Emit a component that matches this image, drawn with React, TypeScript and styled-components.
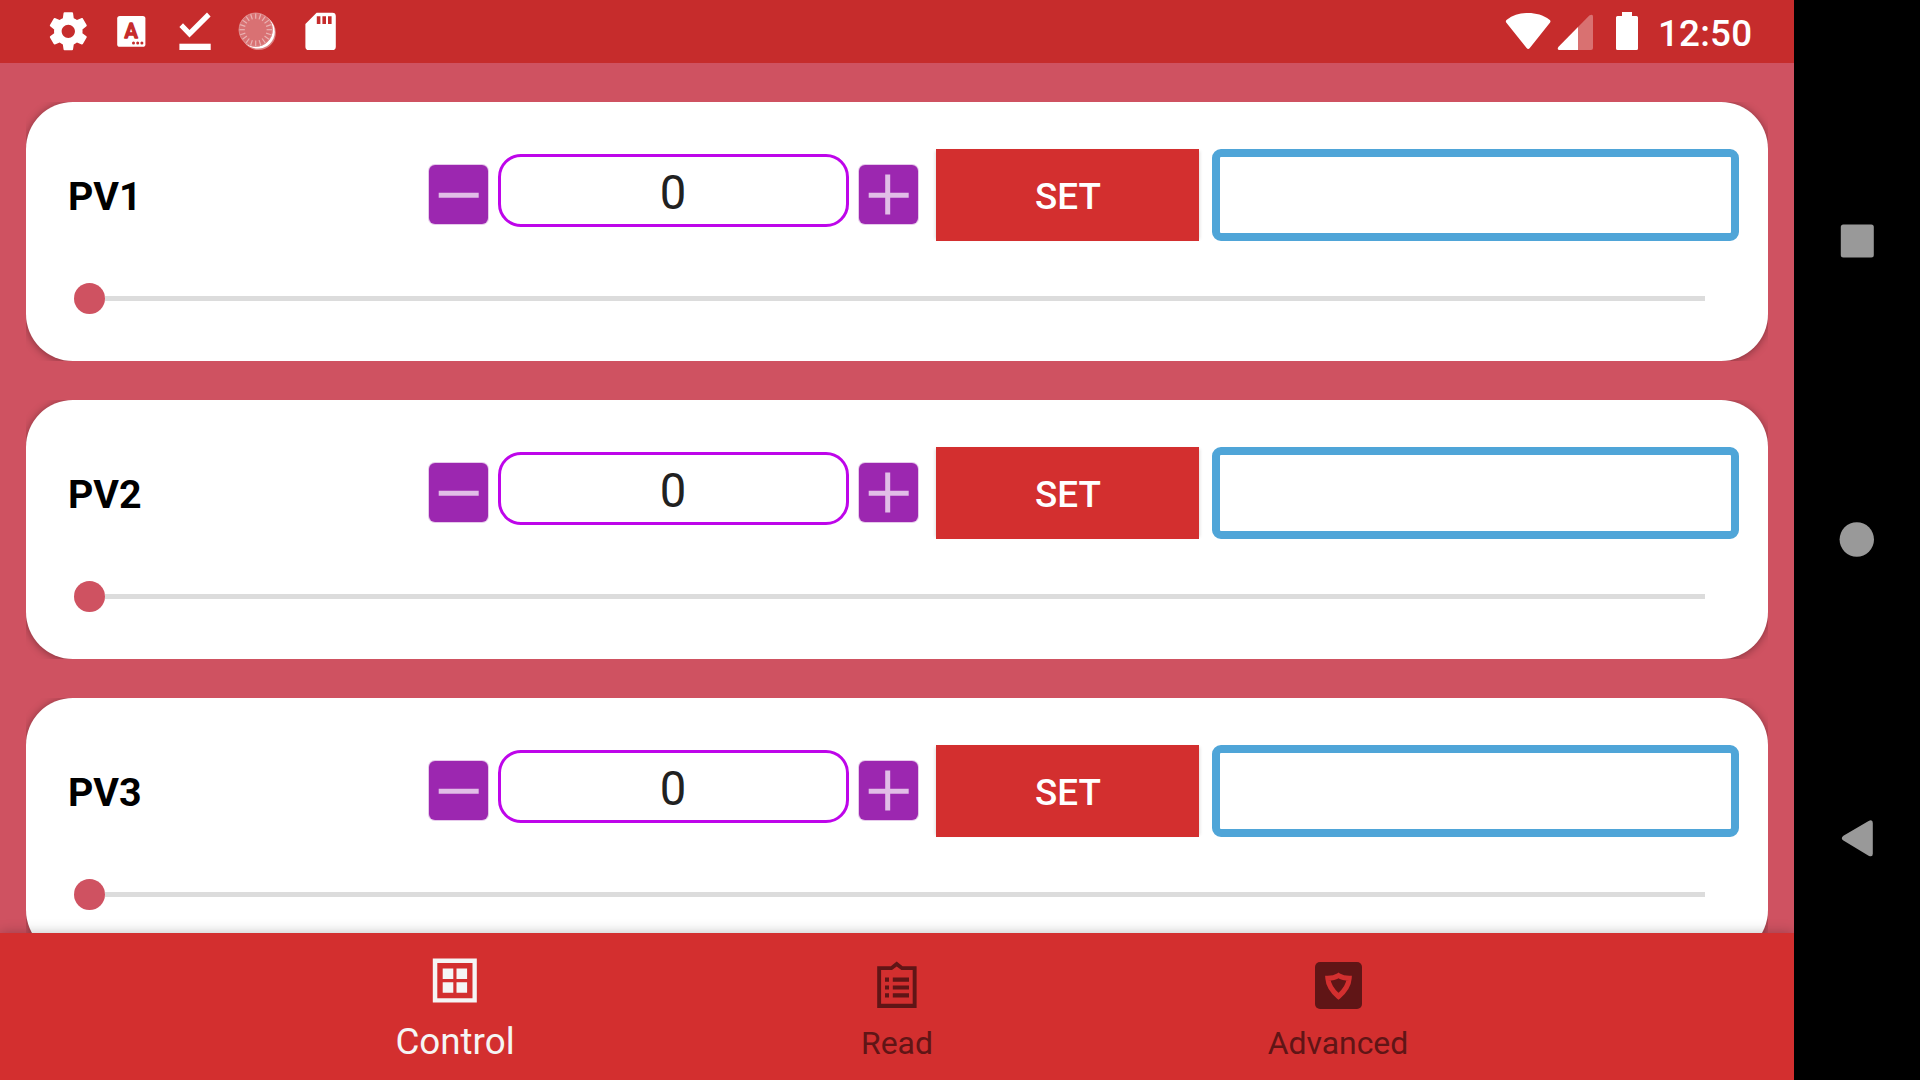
import React from 'react';
import styled, { createGlobalStyle } from 'styled-components';

const GlobalStyle = createGlobalStyle`
  *, *::before, *::after { box-sizing: border-box; }
  body { margin: 0; background: #000; font-family: Roboto, "Noto Sans", sans-serif; }
  button { font: inherit; border: 0; padding: 0; margin: 0; }
  svg { display: block; flex: none; }
`;

const Screen = styled.div`
  display: flex;
  width: 1920px;
  height: 1080px;
  overflow: hidden;
  background: #000;
`;

const AppColumn = styled.div`
  display: flex;
  flex-direction: column;
  width: 1794px;
  height: 1080px;
  background: #cf5261;
`;

const StatusBar = styled.header`
  display: flex;
  flex: none;
  justify-content: space-between;
  height: 63px;
  padding: 0 0 0 37px;
  background: #c62c2c;
`;

const StatusGroup = styled.div`
  display: flex;
`;

const SystemGroup = styled.div`
  display: flex;
  width: 289px;
`;

const Clock = styled.span`
  margin-left: 19px;
  padding-top: 2px;
  color: #fff;
  font-size: 36.75px;
  font-weight: 500;
  letter-spacing: 0.2px;
  line-height: 63px;
`;

const CardList = styled.main`
  display: flex;
  flex: 1;
  flex-direction: column;
  gap: 39px;
  min-height: 0;
  padding: 39px 26px 0;
  overflow: hidden;
`;

const CardClip = styled.section`
  flex: none;
  height: 259px;
  overflow: hidden;
`;

const Card = styled.div`
  height: 259px;
  padding: 47px 29px 0 42px;
  border-radius: 47px;
  background: #fff;
  box-shadow: 0 1px 9px rgba(0, 0, 0, 0.38);
`;

const ControlRow = styled.div`
  display: flex;
  align-items: center;
  height: 92px;
`;

const Label = styled.h2`
  width: 361px;
  margin: 0;
  padding-top: 3px;
  color: #000;
  font-size: 39.375px;
  font-weight: 700;
  line-height: 46px;
`;

const StepButton = styled.button`
  display: flex;
  width: 59px;
  height: 59px;
  margin-bottom: 1px;
  border-radius: 6px;
  background: #9c27b0;
  box-shadow: 0 0 0 1px rgba(156, 39, 176, 0.25);
`;

const ValueField = styled.div`
  width: 351px;
  height: 73px;
  margin: 0 10px 9px;
  padding: 3px 1px 0 0;
  border: 3px solid #be05ea;
  border-radius: 23px;
  color: #212121;
  font-size: 47.25px;
  line-height: 67px;
  text-align: center;
`;

const SetButton = styled.button`
  width: 263px;
  height: 92px;
  margin: 0 13px 0 18px;
  padding: 2px 0 0 1px;
  background: #d32f2f;
  box-shadow: 3px 0 3px -2px rgba(0, 0, 0, 0.12), -3px 0 3px -2px rgba(0, 0, 0, 0.12);
  color: #fff;
  font-size: 36.75px;
  font-weight: 500;
`;

const Readout = styled.div`
  width: 527px;
  height: 92px;
  border: 8px solid #4fa5d8;
  border-radius: 9px;
`;

const Slider = styled.div`
  display: flex;
  align-items: center;
  width: 1631px;
  height: 31px;
  margin: 42px 0 0 6px;
`;

const Thumb = styled.span`
  width: 31px;
  height: 31px;
  border-radius: 50%;
  background: #cf5261;
`;

const Track = styled.span`
  flex: 1;
  height: 5px;
  background: #dcdcdc;
`;

const BottomNav = styled.nav`
  display: flex;
  flex: none;
  justify-content: center;
  height: 147px;
  background: #d32f2f;
  box-shadow: 0 0 12px rgba(0, 0, 0, 0.26);
  z-index: 1;
`;

const NavItem = styled.a<{ $active?: boolean }>`
  display: flex;
  flex-direction: column;
  align-items: center;
  width: 441px;
  padding-top: ${(p) => (p.$active ? 16 : 21)}px;
  padding-right: ${(p) => (p.$active ? 2 : 0)}px;
  color: ${(p) => (p.$active ? '#f5f5f5' : '#601516')};
  font-size: ${(p) => (p.$active ? 36.75 : 31.9)}px;
  line-height: 43px;
`;

const NavLabel = styled.span<{ $gap: number }>`
  margin-top: ${(p) => p.$gap}px;
`;

const SystemNav = styled.aside`
  display: flex;
  flex-direction: column;
  align-items: center;
  width: 126px;
  height: 1080px;
  padding-top: 210px;
  gap: 236px;
`;

const SettingsIcon = () => (
  <svg width="63" height="63" viewBox="0 0 63 63" fill="#fff">
    <path
      transform="translate(8.5 8.5) scale(1.9)"
      d="M19.43 12.98c.04-.32.07-.64.07-.98s-.03-.66-.07-.98l2.11-1.65c.19-.15.24-.42.12-.64l-2-3.46c-.12-.22-.39-.3-.61-.22l-2.49 1c-.52-.4-1.08-.73-1.69-.98l-.38-2.65C14.46 2.18 14.25 2 14 2h-4c-.25 0-.46.18-.49.42l-.38 2.65c-.61.25-1.17.59-1.69.98l-2.49-1c-.23-.09-.49 0-.61.22l-2 3.46c-.13.22-.07.49.12.64l2.11 1.65c-.04.32-.07.65-.07.98s.03.66.07.98l-2.11 1.65c-.19.15-.24.42-.12.64l2 3.46c.12.22.39.3.61.22l2.49-1c.52.4 1.08.73 1.69.98l.38 2.65c.03.24.24.42.49.42h4c.25 0 .46-.18.49-.42l.38-2.65c.61-.25 1.17-.59 1.69-.98l2.49 1c.23.09.49 0 .61-.22l2-3.46c.12-.22.07-.49-.12-.64l-2.11-1.65zM12 15.5c-1.93 0-3.5-1.57-3.5-3.5s1.57-3.5 3.5-3.5 3.5 1.57 3.5 3.5-1.57 3.5-3.5 3.5z"
    />
  </svg>
);

const KeyboardIcon = () => (
  <svg width="63" height="63" viewBox="0 0 63 63">
    <rect x="17.2" y="16" width="28.2" height="30.8" rx="2.6" fill="#fff" />
    <text
      x="31.2"
      y="38"
      textAnchor="middle"
      fontFamily="Roboto, sans-serif"
      fontSize="20"
      fontWeight="500"
      fill="#c62c2c"
      stroke="#c62c2c"
      strokeWidth="1.4"
      strokeLinejoin="round"
    >
      A
    </text>
    <g fill="#c62c2c">
      <circle cx="33.5" cy="43.1" r="1.5" />
      <circle cx="37.7" cy="43.1" r="1.5" />
      <circle cx="41.9" cy="43.1" r="1.5" />
    </g>
  </svg>
);

const DoneIcon = () => (
  <svg width="63" height="63" viewBox="0 0 63 63" fill="#fff">
    <path d="M16.4 27l3.6-3.7 6.5 6.7L44 12.6l3.6 3.8-21.1 21.2z" />
    <path d="M16.4 43.7h31.3V50H16.4z" />
  </svg>
);

const SyncIcon = () => {
  const ticks = Array.from({ length: 20 }, (_, i) => i * 18);
  return (
    <svg width="63" height="63" viewBox="0 0 63 63">
      <circle cx="32.6" cy="32.8" r="17.3" fill="#fff" opacity="0.4" />
      <circle cx="31.9" cy="31.7" r="16.9" fill="#fff" />
      <circle cx="29.7" cy="29.7" r="17" fill="#d97173" />
      <circle cx="29.7" cy="29.7" r="16.6" fill="none" stroke="#e08f8f" strokeWidth="0.8" />
      <g stroke="#eab3b3" strokeWidth="1.2">
        {ticks.map((a) => (
          <path key={a} d="M29.7 13.4v5.4" transform={`rotate(${a} 29.7 29.7)`} />
        ))}
      </g>
    </svg>
  );
};

const SdCardIcon = () => (
  <svg width="63" height="63" viewBox="0 0 63 63">
    <path d="M27.6 12.7h15.8a3.4 3.4 0 0 1 3.4 3.4v30.6a3.4 3.4 0 0 1-3.4 3.4H19.8a3.4 3.4 0 0 1-3.4-3.4V24z" fill="#fff" />
    <path d="M27.8 16.2h3.6V24h-3.6zM33.4 16.2H37V24h-3.6zM39 16.2h3.6V24H39z" fill="#c62c2c" />
  </svg>
);

const WifiIcon = () => (
  <svg width="47" height="63" viewBox="0 0 47 63" fill="#fff">
    <path d="M1.2 22.4Q.2 20.8 1.8 19.7C8 15 15.5 13 23.2 13s15.2 2 21.3 6.7q1.6 1.1.6 2.7L24.8 48q-1.6 2-3.2 0z" />
  </svg>
);

const SignalIcon = () => (
  <svg width="42" height="63" viewBox="0 0 42 63" fill="#fff">
    <path d="M26 27v23H7.2q-2.4-.4-.9-3z" />
    <path d="M26 27l11.3-11.4q3.7-2 3.7 1V48q0 2-2 2H26z" opacity="0.33" />
  </svg>
);

const BatteryIcon = () => (
  <svg width="45" height="63" viewBox="0 0 45 63" fill="#fff">
    <path d="M28 12h10v4h4.5a1.5 1.5 0 0 1 1.5 1.5v31a1.5 1.5 0 0 1-1.5 1.5h-19a1.5 1.5 0 0 1-1.5-1.5v-31a1.5 1.5 0 0 1 1.5-1.5H28z" />
  </svg>
);

const StepGlyph = ({ plus }: { plus?: boolean }) => (
  <svg width="59" height="59" viewBox="0 0 59 59" fill="#e1bee7">
    <path d="M9.7 27.7h40v5h-40z" />
    {plus && <path d="M26.2 9.5h5v40h-5z" />}
  </svg>
);

const GridIcon = () => (
  <svg width="63" height="63" viewBox="0 0 63 63" fill="#f5f5f5">
    <g transform="translate(-0.7 0)">
      <path fillRule="evenodd" d="M9.5 9.6h44v44h-44zM14 14v35.2h35.2V14z" />
      <path d="M19.4 19.5H30V30H19.4zM33.2 19.5h10.6V30H33.2zM19.4 33.2H30v10.6H19.4zM33.2 33.2h10.6v10.6H33.2z" />
    </g>
  </svg>
);

const ClipboardIcon = () => (
  <svg width="63" height="63" viewBox="0 0 63 63" fill="#601516">
    <g transform="translate(-0.8 0)">
      <path
        fillRule="evenodd"
        d="M12 12.2h13.6l5.9-4.7 5.9 4.7h14V54H12zM15.9 16.1v33.6h31.6V16.1H36.2l-4.7-3.6-4.7 3.6z"
      />
      <path d="M19.8 23.6h4v4.2h-4zM27.6 23.6h16.2v4.2H27.6zM19.8 31.4h4v4.2h-4zM27.6 31.4h16.2v4.2H27.6zM19.8 39.2h4v4.2h-4zM27.6 39.2h16.2v4.2H27.6z" />
    </g>
  </svg>
);

const ShieldIcon = () => (
  <svg width="63" height="63" viewBox="0 0 63 63">
    <rect x="8" y="8" width="47" height="47" rx="5" fill="#601516" />
    <path
      d="M31.5 21.5c3.2 2 6.7 2.8 10.7 2.8-.5 7-5.2 13.5-10.7 18.2-5.5-4.7-10.2-11.2-10.7-18.2 4 0 7.5-.8 10.7-2.8z"
      fill="none"
      stroke="#d32f2f"
      strokeWidth="5"
    />
  </svg>
);

const RecentsIcon = () => (
  <svg width="63" height="63" viewBox="0 0 63 63" fill="#999">
    <rect x="14.8" y="14.5" width="33" height="33" rx="2.5" />
  </svg>
);

const HomeIcon = () => (
  <svg width="63" height="63" viewBox="0 0 63 63" fill="#999">
    <circle cx="30.8" cy="30.5" r="17.2" />
  </svg>
);

const BackIcon = () => (
  <svg width="63" height="63" viewBox="0 0 63 63" fill="#999">
    <path d="M17.4 27.7L42.6 12.9q4.2-1.9 4.2 2V45.7q0 3.9-4.2 2L17.4 32.600q-3.2-2.3 0-4.9z" />
  </svg>
);

const channels = [
  { name: 'PV1', value: 0 },
  { name: 'PV2', value: 0 },
  { name: 'PV3', value: 0 },
];

const ChannelCard = ({ name, value }: { name: string; value: number }) => (
  <CardClip>
    <Card>
      <ControlRow>
        <Label>{name}</Label>
        <StepButton aria-label="Decrease">
          <StepGlyph />
        </StepButton>
        <ValueField>{value}</ValueField>
        <StepButton aria-label="Increase">
          <StepGlyph plus />
        </StepButton>
        <SetButton>SET</SetButton>
        <Readout />
      </ControlRow>
      <Slider>
        <Thumb />
        <Track />
      </Slider>
    </Card>
  </CardClip>
);

export default function App() {
  return (
    <>
      <GlobalStyle />
      <Screen>
        <AppColumn>
          <StatusBar>
            <StatusGroup>
              <SettingsIcon />
              <KeyboardIcon />
              <DoneIcon />
              <SyncIcon />
              <SdCardIcon />
            </StatusGroup>
            <SystemGroup>
              <WifiIcon />
              <SignalIcon />
              <BatteryIcon />
              <Clock>12:50</Clock>
            </SystemGroup>
          </StatusBar>
          <CardList>
            {channels.map((c) => (
              <ChannelCard key={c.name} {...c} />
            ))}
          </CardList>
          <BottomNav>
            <NavItem $active>
              <GridIcon />
              <NavLabel $gap={8}>Control</NavLabel>
            </NavItem>
            <NavItem>
              <ClipboardIcon />
              <NavLabel $gap={5}>Read</NavLabel>
            </NavItem>
            <NavItem>
              <ShieldIcon />
              <NavLabel $gap={5}>Advanced</NavLabel>
            </NavItem>
          </BottomNav>
        </AppColumn>
        <SystemNav>
          <RecentsIcon />
          <HomeIcon />
          <BackIcon />
        </SystemNav>
      </Screen>
    </>
  );
}
